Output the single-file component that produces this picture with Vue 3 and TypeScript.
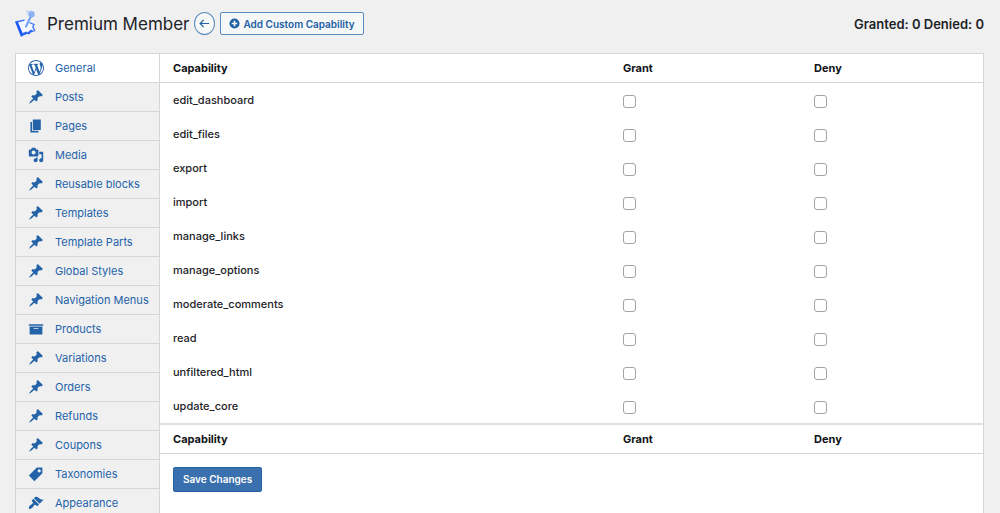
<script setup lang="ts">
import { ref, computed } from 'vue'

type IconName = 'wordpress' | 'pin' | 'page' | 'media' | 'archive' | 'tag' | 'brush'

interface Tab {
  label: string
  icon: IconName
}

interface Capability {
  name: string
  grant: boolean
  deny: boolean
}

const icons: Record<IconName, string> = {
  wordpress:
    'M20 10c0-5.51-4.49-10-10-10C4.48 0 0 4.49 0 10c0 5.52 4.48 10 10 10 5.51 0 10-4.48 10-10zM7.78 15.37L4.37 6.22c.55-.02 1.17-.08 1.17-.08.5-.06.44-1.13-.06-1.11 0 0-1.45.11-2.37.11-.18 0-.37 0-.58-.01C4.12 2.69 6.87 1.11 10 1.11c2.33 0 4.45.87 6.05 2.34-.68-.11-1.65.39-1.65 1.58 0 .74.45 1.36.9 2.1.35.61.55 1.36.55 2.46 0 1.49-1.4 5-1.4 5l-3.03-8.37c.54-.02.82-.17.82-.17.5-.05.44-1.25-.06-1.22 0 0-1.44.12-2.38.12-.87 0-2.33-.12-2.33-.12-.5-.03-.56 1.2-.06 1.22l.92.08 1.26 3.41zM17.41 10c.24-.64.74-1.87.43-4.25.7 1.29 1.05 2.71 1.05 4.25 0 3.29-1.73 6.24-4.4 7.78.97-2.59 1.94-5.2 2.92-7.78zM6.1 18.09C3.12 16.65 1.11 13.53 1.11 10c0-1.3.23-2.48.72-3.59C3.25 10.3 4.67 14.2 6.1 18.09zm4.03-6.63l2.58 6.98c-.86.29-1.76.45-2.71.45-.79 0-1.57-.11-2.29-.33.81-2.38 1.62-4.74 2.42-7.1z',
  pin: 'M10.44 3.02l1.82-1.82 6.36 6.35-1.83 1.82c-1.05-.68-2.48-.57-3.41.36l-.75.75c-.92.93-1.04 2.35-.35 3.41l-1.83 1.82-2.41-2.41-2.8 2.79c-.42.42-3.38 2.71-3.8 2.29s1.86-3.39 2.28-3.81l2.79-2.79L4.1 9.36l1.83-1.82c1.05.69 2.48.57 3.4-.36l.75-.75c.93-.92 1.05-2.35.36-3.41z',
  page: 'M6 15V2h10v13H6zm-1 1h8v2H3V5h2v11z',
  media:
    'M13 11V4c0-.55-.45-1-1-1h-1.67L9 1H5L3.67 3H2c-.55 0-1 .45-1 1v7c0 .55.45 1 1 1h10c.55 0 1-.45 1-1zM7 4.5c1.38 0 2.5 1.12 2.5 2.5S8.38 9.5 7 9.5 4.5 8.38 4.5 7 5.62 4.5 7 4.5zM14 6h5v10.5c0 1.38-1.12 2.5-2.5 2.5S14 17.88 14 16.5s1.12-2.5 2.5-2.5c.17 0 .34.02.5.05V9h-3V6zm-4 8.05V13h2v3.5c0 1.38-1.12 2.5-2.5 2.5S7 17.88 7 16.5 8.12 14 9.5 14c.17 0 .34.02.5.05z',
  archive: 'M19 4v2H1V4h18zM2 7h16v10H2V7zm11 3V9H7v1h6z',
  tag: 'M11 2h7v7L8 19l-7-7zm3 6c1.1 0 2-.9 2-2s-.9-2-2-2-2 .9-2 2 .9 2 2 2z',
  brush:
    'M14.48 11.06L7.41 3.99l1.5-1.5c.5-.56 2.3-.47 3.51.32 1.21.8 1.43 1.28 2.91 2.1 1.18.64 2.45 1.26 4.45.85zm-.71.71L6.7 4.7 4.93 6.47c-.39.39-.39 1.02 0 1.41l1.06 1.06c.39.39.39 1.03 0 1.42-.6.6-1.43 1.11-2.21 1.69-.35.26-.7.53-1.01.84C1.43 14.23.4 16.08 1.4 17.07c.99 1 2.84-.03 4.18-1.36.31-.31.58-.66.85-1.02.57-.78 1.08-1.61 1.69-2.21.39-.39 1.02-.39 1.41 0l1.06 1.06c.39.39 1.02.39 1.41 0z',
}

const tabs: Tab[] = [
  { label: 'General', icon: 'wordpress' },
  { label: 'Posts', icon: 'pin' },
  { label: 'Pages', icon: 'page' },
  { label: 'Media', icon: 'media' },
  { label: 'Reusable blocks', icon: 'pin' },
  { label: 'Templates', icon: 'pin' },
  { label: 'Template Parts', icon: 'pin' },
  { label: 'Global Styles', icon: 'pin' },
  { label: 'Navigation Menus', icon: 'pin' },
  { label: 'Products', icon: 'archive' },
  { label: 'Variations', icon: 'pin' },
  { label: 'Orders', icon: 'pin' },
  { label: 'Refunds', icon: 'pin' },
  { label: 'Coupons', icon: 'pin' },
  { label: 'Taxonomies', icon: 'tag' },
  { label: 'Appearance', icon: 'brush' },
]

const activeTab = ref('General')

const capabilities = ref<Capability[]>(
  [
    'edit_dashboard',
    'edit_files',
    'export',
    'import',
    'manage_links',
    'manage_options',
    'moderate_comments',
    'read',
    'unfiltered_html',
    'update_core',
  ].map((name) => ({ name, grant: false, deny: false })),
)

const granted = computed(() => capabilities.value.filter((c) => c.grant).length)
const denied = computed(() => capabilities.value.filter((c) => c.deny).length)
</script>

<template>
  <div class="page">
    <header class="header">
      <svg class="logo" viewBox="0 0 22 28" aria-hidden="true">
        <path d="M1 12l8-2 8 1 2 4-1 2 2 4-13 5z" fill="#f4f7ff" />
        <path d="M0 11.500l2.500-.5L8 24l-2 3z" fill="#1a56f0" />
        <path d="M5.800 26.800L7.500 23l4-1.500 1 1 3.500-3 1.500 1 2.800.5-5 1.800-.5 1.500-3-.3z" fill="#2a66f5" />
        <path
          d="M1 12l8.500-1.800M14.500 12.500l4.500 2-1.200 2.500 2.200 3.800"
          fill="none"
          stroke="#2f6cf5"
          stroke-width="1.300"
          stroke-linejoin="round"
        />
        <path d="M15.800 6.500L11 16.500" stroke="#6fa0f2" stroke-width="2" stroke-linecap="round" />
        <circle cx="16.500" cy="4.200" r="3.200" fill="#8ab2f3" />
        <circle cx="12.500" cy="1.500" r="1.200" fill="#b7d0f8" />
        <circle cx="12" cy="4" r="0.800" fill="#c9dcfa" />
        <circle cx="15.500" cy="1" r="0.800" fill="#b7d0f8" />
      </svg>
      <h1 class="title">Premium Member</h1>
      <a class="back" href="#" aria-label="Back">
        <svg viewBox="0 0 12 12" aria-hidden="true">
          <path d="M11 6H1.500M5 2L1.200 6 5 10" fill="none" stroke="currentColor" stroke-width="1.300" />
        </svg>
      </a>
      <button class="add" type="button">
        <svg viewBox="0 0 12 12" aria-hidden="true">
          <circle cx="6" cy="6" r="5.500" fill="currentColor" />
          <path d="M6 3v6M3 6h6" stroke="#f6f7f7" stroke-width="1.800" />
        </svg>
        Add Custom Capability
      </button>
      <div class="counts">Granted: {{ granted }} Denied: {{ denied }}</div>
    </header>

    <div class="panel">
      <nav class="tabs">
        <a
          v-for="tab in tabs"
          :key="tab.label"
          href="#"
          class="tab"
          :class="{ active: tab.label === activeTab }"
          @click.prevent="activeTab = tab.label"
        >
          <svg viewBox="0 0 20 20" aria-hidden="true"><path :d="icons[tab.icon]" /></svg>
          {{ tab.label }}
        </a>
      </nav>

      <form class="content" @submit.prevent>
        <table class="caps">
          <colgroup>
            <col class="col-name" />
            <col class="col-grant" />
            <col />
          </colgroup>
          <thead>
            <tr>
              <th scope="col">Capability</th>
              <th scope="col">Grant</th>
              <th scope="col">Deny</th>
            </tr>
          </thead>
          <tbody>
            <tr v-for="cap in capabilities" :key="cap.name">
              <td>{{ cap.name }}</td>
              <td><input v-model="cap.grant" type="checkbox" :aria-label="`Grant ${cap.name}`" /></td>
              <td><input v-model="cap.deny" type="checkbox" :aria-label="`Deny ${cap.name}`" /></td>
            </tr>
          </tbody>
          <tfoot>
            <tr>
              <th scope="col">Capability</th>
              <th scope="col">Grant</th>
              <th scope="col">Deny</th>
            </tr>
          </tfoot>
        </table>
        <button class="save" type="submit">Save Changes</button>
      </form>
    </div>
  </div>
</template>

<style>
body {
  background: #f0f0f1;
}
</style>

<style scoped>
.page {
  box-sizing: border-box;
  height: 100vh;
  overflow: hidden;
  padding: 0 16px 0 15px;
  background: #f0f0f1;
  color: #1d2327;
  font-family: Inter, "Liberation Sans", sans-serif;
  font-size: 11px;
}

.header {
  display: flex;
  align-items: center;
  height: 53px;
  box-sizing: border-box;
  padding-bottom: 6px;
}

.logo {
  width: 22px;
  height: 28px;
}

.title {
  margin: 0 4px 0 10px;
  font-size: 17px;
  font-weight: 400;
  line-height: 24px;
  white-space: nowrap;
}

.back {
  display: flex;
  align-items: center;
  justify-content: center;
  box-sizing: border-box;
  width: 21px;
  height: 23px;
  margin-right: 5px;
  border: 1px solid #5c8bc0;
  border-radius: 50%;
  background: #f6f7f7;
  color: #2260a6;
}

.back svg {
  width: 11px;
  height: 11px;
}

.add {
  display: flex;
  align-items: center;
  gap: 4px;
  height: 23px;
  padding: 0 8px;
  border: 1px solid #5c8bc0;
  border-radius: 2px;
  background: #f6f7f7;
  color: #2260a6;
  font: 600 10px Inter, "Liberation Sans", sans-serif;
  white-space: nowrap;
}

.add svg {
  width: 11px;
  height: 11px;
}

.counts {
  margin-left: auto;
  font-size: 13px;
  font-weight: 600;
  white-space: nowrap;
}

.panel {
  display: flex;
  border: 1px solid #d5d6d9;
  background: #fff;
}

.tabs {
  flex: none;
  box-sizing: border-box;
  width: 144px;
  border-right: 1px solid #d5d6d9;
  background: #f0f0f1;
}

.tab {
  display: flex;
  align-items: center;
  gap: 11px;
  box-sizing: border-box;
  height: 29px;
  padding: 0 0 1px 12px;
  border-bottom: 1px solid #d5d6d9;
  color: #2463a8;
  text-decoration: none;
  white-space: nowrap;
}

.tab.active {
  background: #fff;
}

.tab svg {
  width: 16px;
  height: 16px;
  fill: currentColor;
}

.content {
  flex: 1;
  min-width: 0;
}

.caps {
  width: 100%;
  table-layout: fixed;
  border-collapse: separate;
  border-spacing: 0;
}

.col-name {
  width: 450px;
}

.col-grant {
  width: 191px;
}

.caps th,
.caps td {
  padding: 0 0 0 13px;
  text-align: left;
}

.caps th {
  height: 28px;
  border-bottom: 1px solid #d5d6d9;
  font-weight: 700;
  color: #101418;
}

.caps tfoot th {
  border-top: 2px solid #e0e0e4;
}

.caps td {
  height: 34px;
  font-weight: 500;
}

.caps input {
  display: block;
  box-sizing: border-box;
  width: 13px;
  height: 13px;
  margin: 3px 0 0;
  appearance: none;
  border: 1px solid #a0a3a7;
  border-radius: 3px;
  background: #fff;
}

.caps input:checked {
  background: #2463a8;
}

.save {
  display: block;
  height: 25px;
  margin: 13px;
  padding: 0 9px 1px;
  border: 1px solid #2463a8;
  border-radius: 2px;
  background: #3a70ad;
  color: #fff;
  font: 600 10px Inter, "Liberation Sans", sans-serif;
}
</style>
